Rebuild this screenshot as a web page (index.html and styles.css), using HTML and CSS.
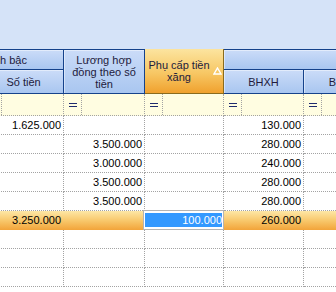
FILE: index.html
```html
<!DOCTYPE html>
<html lang="vi">
<head>
    <meta charset="UTF-8">
    <meta name="viewport" content="width=device-width, initial-scale=1.0">
    <title>Bảng lương</title>
    <link rel="stylesheet" href="styles.css">
</head>
<body>
    <div class="top-pane"></div>
    <div class="grid">
        <div class="head">
            <div class="hcell top-row band-left">h bậc</div>
            <div class="hcell top-row col-luong">Lương hợp đồng theo số tiền</div>
            <div class="hcell sorted">
                <span class="caption">Phụ cấp tiền xăng</span>
                <svg class="sort-icon" width="9" height="8" viewBox="0 0 9 8">
                    <polygon points="4.5,1 8,7 1,7" fill="none" stroke="#fff" stroke-width="1.4"/>
                </svg>
            </div>
            <div class="hcell top-row band-right"></div>
            <div class="hcell c1">Số tiền</div>
            <div class="hcell c4">BHXH</div>
            <div class="hcell c5">BHYT</div>
        </div>

        <div class="row filter-row">
            <div class="fcell"><span class="op"><i class="eq"></i></span><span class="fval"></span></div>
            <div class="fcell"><span class="op"><i class="eq"></i></span><span class="fval"></span></div>
            <div class="fcell"><span class="op"><i class="eq"></i></span><span class="fval"></span></div>
            <div class="fcell"><span class="op"><i class="eq"></i></span><span class="fval"></span></div>
            <div class="fcell"><span class="op"><i class="eq"></i></span><span class="fval"></span></div>
        </div>

        <div class="row">
            <div class="cell">1.625.000</div><div class="cell"></div><div class="cell"></div><div class="cell">130.000</div><div class="cell"></div>
        </div>
        <div class="row">
            <div class="cell"></div><div class="cell">3.500.000</div><div class="cell"></div><div class="cell">280.000</div><div class="cell"></div>
        </div>
        <div class="row">
            <div class="cell"></div><div class="cell">3.000.000</div><div class="cell"></div><div class="cell">240.000</div><div class="cell"></div>
        </div>
        <div class="row">
            <div class="cell"></div><div class="cell">3.500.000</div><div class="cell"></div><div class="cell">280.000</div><div class="cell"></div>
        </div>
        <div class="row">
            <div class="cell"></div><div class="cell">3.500.000</div><div class="cell"></div><div class="cell">280.000</div><div class="cell"></div>
        </div>
        <div class="row focused">
            <div class="cell">3.250.000</div>
            <div class="cell"></div>
            <div class="cell edit-cell"><div class="editor"><span class="selection">100.000</span></div></div>
            <div class="cell">260.000</div>
            <div class="cell"></div>
        </div>
        <div class="row">
            <div class="cell"></div><div class="cell"></div><div class="cell"></div><div class="cell"></div><div class="cell"></div>
        </div>
        <div class="row">
            <div class="cell"></div><div class="cell"></div><div class="cell"></div><div class="cell"></div><div class="cell"></div>
        </div>
        <div class="row">
            <div class="cell"></div><div class="cell"></div><div class="cell"></div><div class="cell"></div><div class="cell"></div>
        </div>
    </div>
</body>
</html>
```

FILE: styles.css
```css
body {
    margin: 0;
    overflow: hidden;
    background: #fff;
    font-family: "Liberation Sans", Arial, sans-serif;
    font-size: 11px;
    color: #000;
}
.top-pane {
    height: 49px;
    background: #d5e3f8;
}
.grid {
    margin-left: -16px;
    width: 400px;
}
.head {
    display: grid;
    grid-template-columns: 80px 81px 79px 80px 80px;
    grid-template-rows: 21px 24px;
}
.hcell {
    box-sizing: border-box;
    border-right: 1px solid #15428b;
    border-bottom: 1px solid #15428b;
    background: linear-gradient(#cbdcf8, #a9c6f0);
    box-shadow: inset 1px 1px 0 rgba(255, 255, 255, 0.45);
    color: #221a3c;
    display: flex;
    align-items: center;
    justify-content: center;
    text-align: center;
    line-height: 12px;
}
.top-row {
    border-top: 1px solid #15428b;
}
.band-left {
    grid-column: 1;
    grid-row: 1;
    justify-content: flex-start;
    padding-left: 16px;
}
.col-luong {
    grid-column: 2;
    grid-row: 1 / 3;
    padding: 0 1px;
}
.sorted {
    grid-column: 3;
    grid-row: 1 / 3;
    background: linear-gradient(#fce49f, #f7c764 55%, #f0a12e);
    border-right-color: #8a6b1c;
    border-bottom-color: #8a6b1c;
    box-shadow: none;
}
.sorted .caption {
    flex: 1;
}
.sort-icon {
    margin-right: 1px;
    flex: none;
}
.band-right {
    grid-column: 4 / 6;
    grid-row: 1;
}
.c1 {
    grid-column: 1;
    grid-row: 2;
}
.c4 {
    grid-column: 4;
    grid-row: 2;
}
.c5 {
    grid-column: 5;
    grid-row: 2;
}
.row {
    display: grid;
    grid-template-columns: 80px 81px 79px 80px 80px;
}
.filter-row {
    background: #fffde1;
}
.fcell {
    box-sizing: border-box;
    height: 22px;
    display: flex;
    border-right: 1px dotted #a3a3a3;
    border-bottom: 1px dotted #a3a3a3;
}
.op {
    box-sizing: border-box;
    width: 18px;
    border-right: 1px dotted #a3a3a3;
    display: flex;
    align-items: center;
    justify-content: center;
}
.eq {
    width: 8px;
    height: 2px;
    border-top: 1px solid #1e2a6e;
    border-bottom: 1px solid #1e2a6e;
}
.fval {
    flex: 1;
}
.cell {
    box-sizing: border-box;
    height: 19px;
    line-height: 18px;
    padding-right: 2px;
    text-align: right;
    white-space: nowrap;
    border-right: 1px dotted #a3a3a3;
    border-bottom: 1px dotted #a3a3a3;
}
.focused {
    background: linear-gradient(#fde7a6, #f8c86c 50%, #f2a43a);
}
.focused .cell {
    border-color: transparent;
}
.edit-cell {
    padding: 0;
}
.editor {
    position: relative;
    box-sizing: border-box;
    height: 20px;
    margin: -1px -1px 0 -2px;
    padding: 2px 1px;
    border: 1px solid #b4b4b4;
    background: #fff;
}
.selection {
    display: block;
    height: 14px;
    line-height: 14px;
    background: #3399ff;
    color: #fff;
    text-align: right;
}
```
